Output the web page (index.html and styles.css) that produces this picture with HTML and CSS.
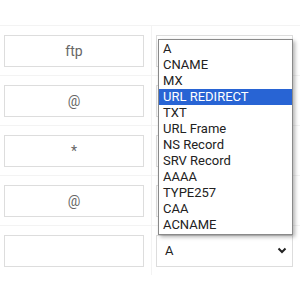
FILE: index.html
```html
<!DOCTYPE html>
<html lang="en">
<head>
    <meta charset="UTF-8">
    <meta name="viewport" content="width=device-width, initial-scale=1.0">
    <title>DNS records</title>
    <link rel="stylesheet" href="styles.css">
</head>
<body>

    <div class="records">
        <div class="row">
            <div class="cell host"><input class="field" type="text" value="ftp"></div>
            <div class="cell type"><div class="select"></div></div>
        </div>
        <div class="row">
            <div class="cell host"><input class="field" type="text" value="@"></div>
            <div class="cell type"><div class="select"></div></div>
        </div>
        <div class="row">
            <div class="cell host"><input class="field" type="text" value="*"></div>
            <div class="cell type"><div class="select"></div></div>
        </div>
        <div class="row">
            <div class="cell host"><input class="field" type="text" value="@"></div>
            <div class="cell type"><div class="select"></div></div>
        </div>
        <div class="row">
            <div class="cell host"><input class="field" type="text" value=""></div>
            <div class="cell type">
                <div class="select">
                    <span>A</span>
                    <svg class="chevron" width="10" height="7" viewBox="0 0 10 7">
                        <path d="M1.5 1.5 L5 5 L8.5 1.5" fill="none" stroke="#222" stroke-width="2"/>
                    </svg>
                </div>
            </div>
        </div>
    </div>

    <!-- open dropdown of the last row -->
    <ul class="options">
        <li>A</li>
        <li>CNAME</li>
        <li>MX</li>
        <li class="active">URL REDIRECT</li>
        <li>TXT</li>
        <li>URL Frame</li>
        <li>NS Record</li>
        <li>SRV Record</li>
        <li>AAAA</li>
        <li>TYPE257</li>
        <li>CAA</li>
        <li>ACNAME</li>
    </ul>

</body>
</html>
```

FILE: styles.css
```css
body {
    margin: 0;
    font-family: Roboto, "Liberation Sans", sans-serif;
    background: #fff;
    color: #222;
}
.records {
    padding-top: 25px;
}
.row {
    display: flex;
    height: 50px;
    border-top: 1px solid #f3f3f3;
    box-sizing: border-box;
}
.cell {
    display: flex;
    align-items: center;
    box-sizing: border-box;
}
.host {
    width: 152px;
    padding: 0 7px 0 4px;
    border-right: 1px solid #f3f3f3;
}
.type {
    flex: 1;
    padding: 0 7px 0 4px;
}
.field {
    width: 100%;
    height: 32px;
    box-sizing: border-box;
    border: 1px solid #ddd;
    font-family: inherit;
    font-size: 14px;
    color: #666;
    text-align: center;
    outline: none;
}
.select {
    width: 100%;
    height: 32px;
    box-sizing: border-box;
    border: 1px solid #ddd;
    display: flex;
    align-items: center;
    justify-content: space-between;
    padding: 0 5px 0 8px;
    font-size: 13px;
}
.chevron {
    display: block;
}
.options {
    position: absolute;
    left: 158px;
    top: 39px;
    width: 135px;
    margin: 0;
    padding: 1px 0;
    list-style: none;
    box-sizing: border-box;
    background: #fff;
    border: 1px solid #8a8a8a;
    box-shadow: 2px 2px 4px rgba(0, 0, 0, 0.3);
    font-size: 13px;
}
.options li {
    height: 16px;
    line-height: 16px;
    padding-left: 4px;
    white-space: nowrap;
}
.options .active {
    background: #2864d4;
    color: #fff;
}
```
